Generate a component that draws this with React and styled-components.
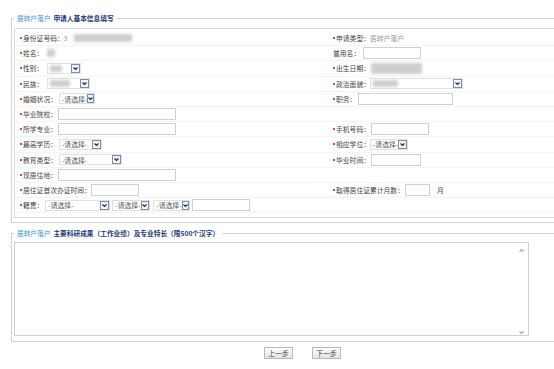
import React from 'react';
import styled, { createGlobalStyle } from 'styled-components';

const Global = createGlobalStyle`
  html, body { margin: 0; padding: 0; background: #fff; overflow: hidden; }
  body { font-family: "Noto Sans CJK SC", "Noto Sans", sans-serif; }
`;

const Page = styled.div`
  width: 605px;
  padding-top: 13px;
  font-size: 6.8px;
  color: #444;
`;

const Fieldset = styled.fieldset`
  margin: ${p => (p.$gap ? `${p.$gap}px` : '0')} 11px 0 11px;
  border: 1px solid #d2d2d2;
  padding: ${p => p.$pt}px 0 ${p => p.$pb}px 2px;
  min-width: 0;
`;

const Legend = styled.legend`
  padding: 0 3px;
  font-size: 6.7px;
  line-height: 10px;
  height: 10px;
  white-space: nowrap;
`;

const LegendPre = styled.span`
  color: #3f92d8;
  margin-right: 3px;
`;

const LegendTitle = styled.span`
  color: #1d3b78;
  font-weight: bold;
`;

const Grid = styled.div`
  border: 1px solid #dadada;
  padding: 2px 0 4px;
  display: grid;
  grid-template-columns: 315px 1fr;
  grid-auto-rows: 15.2px;
`;

const Cell = styled.div`
  display: flex;
  align-items: center;
  padding-left: ${p => p.$pl}px;
  border-bottom: 1px solid #f4f4f4;
  box-sizing: border-box;
  white-space: nowrap;
`;

const LabelWrap = styled.span`
  display: inline-flex;
  align-items: center;
  color: #444;
`;

const Bullet = styled.span`
  width: 2px;
  height: 2px;
  background: #d44a4a;
  margin-right: 1px;
`;

const Plain = styled.span`
  color: ${p => p.$color || '#444'};
  margin-left: ${p => p.$ml || 0}px;
`;

const Blur = styled.span`
  display: inline-block;
  width: ${p => p.$w}px;
  height: ${p => p.$h || 8}px;
  margin-left: ${p => p.$ml || 0}px;
  background: #cfcfcf;
  filter: blur(1.4px);
`;

const TextInput = styled.input`
  width: ${p => p.$w}px;
  height: 12px;
  box-sizing: border-box;
  border: 1px solid #d0d0d0;
  padding: 0;
  margin: 0 0 0 ${p => p.$ml ?? 1}px;
  background: #fff;
  font-size: 6.8px;
`;

const SelectBox = styled.span`
  display: inline-flex;
  align-items: center;
  justify-content: space-between;
  width: ${p => p.$w}px;
  height: 11px;
  box-sizing: border-box;
  border: 1px solid #e0e0e0;
  margin-left: ${p => p.$ml ?? 2}px;
  padding-left: 2px;
  color: #555;
  background: #fff;
`;

const ArrowBox = styled.span`
  width: 9px;
  height: 9px;
  box-sizing: border-box;
  border: 1px solid #7c8ea8;
  background: #f1f4f8;
  display: flex;
  align-items: center;
  justify-content: center;
`;

const Chevron = ({ up, color = '#1e2a3a' }) => (
  <svg width="5" height="3" viewBox="0 0 5 3">
    <polyline
      points={up ? '0.5,2.5 2.5,0.5 4.5,2.5' : '0.5,0.5 2.5,2.5 4.5,0.5'}
      fill="none"
      stroke={color}
      strokeWidth="1.1"
    />
  </svg>
);

const Select = ({ w, ml, text, blur }) => (
  <SelectBox $w={w} $ml={ml}>
    {blur ? <Blur $w={blur} $h={7} /> : <span>{text}</span>}
    <ArrowBox>
      <Chevron />
    </ArrowBox>
  </SelectBox>
);

const Label = ({ text, bullet = true }) => (
  <LabelWrap>
    {bullet && <Bullet />}
    {text}
  </LabelWrap>
);

const AreaBox = styled.div`
  width: 515px;
  height: 94px;
  box-sizing: border-box;
  border: 1px solid #d0d0d0;
  display: flex;
  background: #fff;
`;

const Area = styled.textarea`
  flex: 1;
  border: none;
  resize: none;
  outline: none;
  padding: 0;
  margin: 0;
  background: transparent;
`;

const ScrollCol = styled.div`
  width: 14px;
  display: flex;
  flex-direction: column;
  justify-content: space-between;
  align-items: center;
  padding: 6px 0 1px;
`;

const ButtonBar = styled.div`
  display: flex;
  justify-content: center;
  gap: 19px;
  margin-top: 5px;
`;

const Button = styled.button`
  width: 29px;
  height: 12px;
  padding: 0;
  border: 1px solid #b9b9b9;
  background: linear-gradient(#fdfdfd, #e4e4e4);
  font-family: inherit;
  font-size: 6.8px;
  line-height: 10px;
  color: #444;
`;

const L = 5;
const R = 3;

export default function App() {
  return (
    <>
      <Global />
      <Page>
        <Fieldset $pt={5} $pb={4}>
          <Legend>
            <LegendPre>居转户落户</LegendPre>
            <LegendTitle>申请人基本信息填写</LegendTitle>
          </Legend>
          <Grid>
            <Cell $pl={L}>
              <Label text="身份证号码：" />
              <Plain $color="#888">3</Plain>
              <Blur $w={58} $ml={6} />
            </Cell>
            <Cell $pl={R}>
              <Label text="申请类型：" />
              <Plain $color="#999">居转户落户</Plain>
            </Cell>

            <Cell $pl={L}>
              <Label text="姓名：" />
              <Blur $w={8} $ml={4} />
            </Cell>
            <Cell $pl={R}>
              <Label text="曾用名：" bullet={false} />
              <TextInput $w={58} $ml={3} />
            </Cell>

            <Cell $pl={L}>
              <Label text="性别：" />
              <Select w={34} ml={4} blur={12} />
            </Cell>
            <Cell $pl={R}>
              <Label text="出生日期：" />
              <Blur $w={51} $h={11} $ml={1} />
            </Cell>

            <Cell $pl={L}>
              <Label text="民族：" />
              <Select w={43} ml={4} blur={20} />
            </Cell>
            <Cell $pl={R}>
              <Label text="政治面貌：" />
              <Select w={93} ml={0} blur={25} />
            </Cell>

            <Cell $pl={L}>
              <Label text="婚姻状况：" />
              <Select w={36} text="-请选择-" />
            </Cell>
            <Cell $pl={R}>
              <Label text="职务：" />
              <TextInput $w={95} $ml={2} />
            </Cell>

            <Cell $pl={L}>
              <Label text="毕业院校：" />
              <TextInput $w={118} />
            </Cell>
            <Cell $pl={R} />

            <Cell $pl={L}>
              <Label text="所学专业：" />
              <TextInput $w={118} />
            </Cell>
            <Cell $pl={R}>
              <Label text="手机号码：" />
              <TextInput $w={58} />
            </Cell>

            <Cell $pl={L}>
              <Label text="最高学历：" />
              <Select w={43} text="-请选择-" />
            </Cell>
            <Cell $pl={R}>
              <Label text="相应学位：" />
              <Select w={38} ml={0} text="-请选择-" />
            </Cell>

            <Cell $pl={L}>
              <Label text="教育类型：" />
              <Select w={63} text="-请选择-" />
            </Cell>
            <Cell $pl={R}>
              <Label text="毕业时间：" />
              <TextInput $w={50} />
            </Cell>

            <Cell $pl={L}>
              <Label text="现居住地：" />
              <TextInput $w={118} />
            </Cell>
            <Cell $pl={R} />

            <Cell $pl={L}>
              <Label text="居住证首次办证时间：" />
              <TextInput $w={48} $ml={0} />
            </Cell>
            <Cell $pl={R}>
              <Label text="取得居住证累计月数：" />
              <TextInput $w={25} />
              <Plain $ml={7}>月</Plain>
            </Cell>

            <Cell $pl={L}>
              <Label text="籍贯：" />
              <Select w={65} text="-请选择-" />
              <Select w={38} text="-请选择-" />
              <Select w={37} ml={3} text="-请选择-" />
              <TextInput $w={58} $ml={2} />
            </Cell>
            <Cell $pl={R} />
          </Grid>
        </Fieldset>

        <Fieldset $gap={5} $pt={4} $pb={5}>
          <Legend>
            <LegendPre>居转户落户</LegendPre>
            <LegendTitle>主要科研成果（工作业绩）及专业特长（限500个汉字）</LegendTitle>
          </Legend>
          <AreaBox>
            <Area />
            <ScrollCol>
              <Chevron up color="#a8a8a8" />
              <Chevron color="#a8a8a8" />
            </ScrollCol>
          </AreaBox>
        </Fieldset>

        <ButtonBar>
          <Button>上一步</Button>
          <Button>下一步</Button>
        </ButtonBar>
      </Page>
    </>
  );
}
